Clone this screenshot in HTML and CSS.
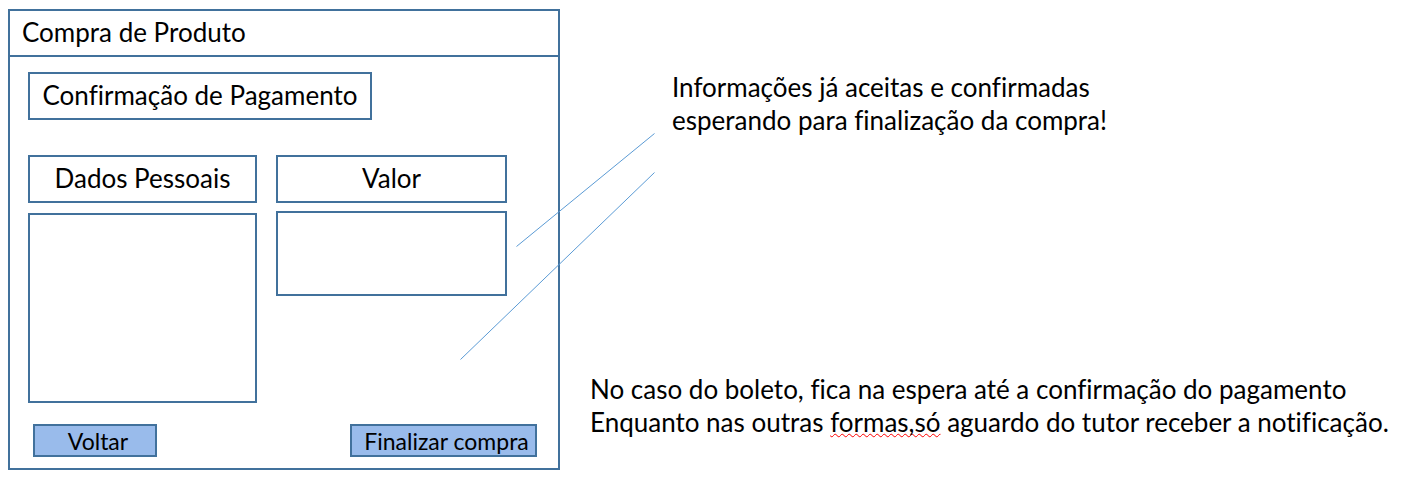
FILE: index.html
```html
<!DOCTYPE html>
<html lang="pt-BR">
<head>
<meta charset="utf-8">
<title>Compra de Produto</title>
<link rel="stylesheet" href="styles.css">
</head>
<body>
<main class="page">
  <section class="window">
    <h1 class="window-title">Compra de Produto</h1>
    <div class="window-body">
      <h2 class="box heading">Confirmação de Pagamento</h2>
      <div class="columns">
        <section class="column column-data">
          <h3 class="box">Dados Pessoais</h3>
          <div class="panel panel-data"></div>
        </section>
        <section class="column column-value">
          <h3 class="box">Valor</h3>
          <div class="panel panel-value"></div>
        </section>
      </div>
      <div class="actions">
        <button class="btn btn-back" type="button">Voltar</button>
        <button class="btn btn-finish" type="button">Finalizar compra</button>
      </div>
    </div>
    <svg class="connectors" width="196" height="228" viewBox="0 0 196 228" aria-hidden="true">
      <path d="M57.500 114.500L195.500 1.500M1.500 227.500L195.500 40.500" fill="none" stroke="#5b9bd5" stroke-width="1"/>
    </svg>
  </section>
  <aside class="notes">
    <p class="note note-accepted">Informações já aceitas e confirmadas<br>esperando para finalização da compra!</p>
    <p class="note note-boleto">No caso do boleto, fica na espera até a confirmação do pagamento<br>Enquanto nas outras <span class="misspelled">formas,só</span> aguardo do tutor receber a notificação.</p>
  </aside>
</main>
</body>
</html>
```
FILE: styles.css
```css
* {
  box-sizing: border-box;
}

body {
  margin: 0;
  background: #fff;
  color: #000;
  font-family: Lato, sans-serif;
  font-size: 26px;
  font-variant-ligatures: none;
  line-height: 33px;
}

h1, h2, h3, p {
  margin: 0;
  font-size: inherit;
  font-weight: 400;
}

.page {
  display: grid;
  grid-template-columns: minmax(0, 552fr) minmax(0, 832fr);
  gap: 30px;
  padding: 9px 0 24px 8px;
}

.window {
  position: relative;
  border: 2px solid #41719c;
}

.window-title {
  padding: 5px 12px 6px;
  border-bottom: 2px solid #41719c;
}

.window-body {
  padding: 15px 21px 11px 18px;
}

.box {
  display: flex;
  align-items: center;
  justify-content: center;
  height: 48px;
  padding-bottom: 1px;
  border: 2px solid #41719c;
}

.heading {
  width: 344px;
}

.columns {
  display: grid;
  grid-template-columns: 229fr 231fr;
  gap: 19px;
  margin: 35px 30px 21px 0;
}

.column {
  display: flex;
  flex-direction: column;
}

.column-data {
  gap: 10px;
}

.column-value {
  gap: 8px;
}

.panel {
  border: 2px solid #41719c;
}

.panel-data {
  height: 190px;
}

.panel-value {
  height: 85px;
}

.actions {
  display: flex;
  justify-content: space-between;
  padding-left: 5px;
}

.btn {
  height: 33px;
  padding: 0 0 0 6px;
  border: 2px solid #41719c;
  border-radius: 0;
  background: #99bbeb;
  color: #000;
  font-family: inherit;
  font-size: 23px;
  font-variant-ligatures: none;
  line-height: 28px;
}

.btn-back {
  width: 124px;
}

.btn-finish {
  width: 187px;
}

/* Lines reach past the right edge of the window towards the note */
.connectors {
  position: absolute;
  top: 121px;
  right: -97px;
}

.notes {
  display: flex;
  flex-direction: column;
  gap: 236px;
  padding-top: 62px;
}

.note-accepted {
  padding-left: 82px;
}

.misspelled {
  text-decoration: underline wavy #f00 1px;
  text-decoration-skip-ink: none;
  text-underline-offset: 1px;
}
```
